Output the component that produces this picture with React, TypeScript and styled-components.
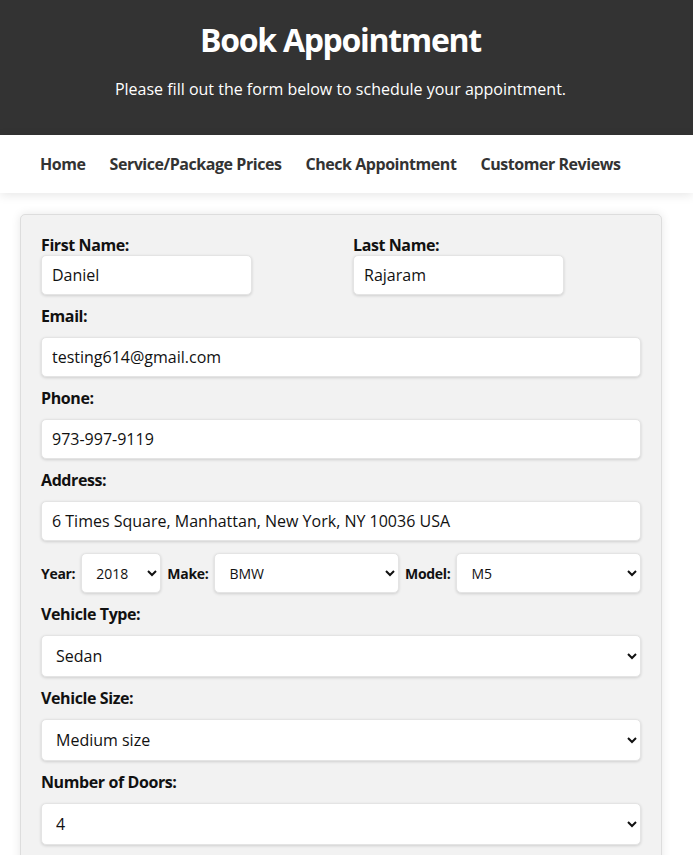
import React from "react";
import styled, { createGlobalStyle } from "styled-components";

const Global = createGlobalStyle`
  html, body { margin: 0; padding: 0; background: #fff; }
  body { font-family: "Open Sans", "Noto Sans", sans-serif; color: #111; }
  * { box-sizing: border-box; }
`;

const Header = styled.header`
  background: #333;
  color: #fff;
  text-align: center;
  padding: 20px 12px 36px 0;
`;

const Title = styled.h1`
  margin: 0;
  font-size: 32px;
  line-height: 40px;
  font-weight: 700;
  letter-spacing: -1.3px;
`;

const Subtitle = styled.p`
  margin: 19px 0 0;
  font-size: 16px;
  line-height: 20px;
`;

const Nav = styled.nav`
  position: relative;
  z-index: 1;
  background: #fff;
  height: 58px;
  display: flex;
  align-items: center;
  gap: 24px;
  padding-left: 40px;
  box-shadow: 0 2px 10px rgba(0, 0, 0, 0.1);
`;

const NavLink = styled.a`
  color: #333;
  font-weight: 700;
  font-size: 16px;
  letter-spacing: -0.45px;
  text-decoration: none;
`;

const Card = styled.form`
  width: 642px;
  margin: 21px 0 0 20px;
  padding: 20px;
  background: #f2f2f2;
  border: 1px solid #ddd;
  border-radius: 5px;
  box-shadow: 0 0 10px rgba(0, 0, 0, 0.1);
`;

const NameRow = styled.div`
  display: grid;
  grid-template-columns: 312px 1fr;
`;

const NameLabel = styled.label`
  display: block;
  font-size: 16px;
  font-weight: 700;
  line-height: 20px;
  letter-spacing: -0.4px;
`;

const Label = styled.label`
  display: block;
  font-size: 16px;
  font-weight: 700;
  line-height: 22px;
  letter-spacing: -0.4px;
  margin: 10px 0;
`;

const fieldBase = `
  display: block;
  border: 1px solid #e4e4e4;
  border-radius: 5px;
  background: #fff;
  box-shadow: 0 1px 3px rgba(0, 0, 0, 0.15);
  font-family: "Open Sans", "Noto Sans", sans-serif;
  color: #111;
  outline: none;
`;

const Input = styled.input<{ $w?: number }>`
  ${fieldBase}
  width: ${(p) => (p.$w ? `${p.$w}px` : "100%")};
  height: 40px;
  padding: 0 10px;
  font-size: 16px;
`;

const Select = styled.select`
  ${fieldBase}
  width: 100%;
  height: 42px;
  padding: 0 10px;
  font-size: 16px;
`;

const VehicleRow = styled.div`
  display: flex;
  align-items: center;
  gap: 6px;
  margin-top: 12px;
`;

const InlineLabel = styled.label`
  font-size: 14px;
  font-weight: 700;
  letter-spacing: -0.3px;
`;

const SmallSelect = styled.select<{ $w?: number }>`
  ${fieldBase}
  height: 40px;
  padding: 0 10px;
  font-size: 14px;
  ${(p) => (p.$w ? `width: ${p.$w}px; flex: none;` : "flex: 1; min-width: 0;")}
`;

export default function App() {
  return (
    <>
      <Global />
      <Header>
        <Title>Book Appointment</Title>
        <Subtitle>Please fill out the form below to schedule your appointment.</Subtitle>
      </Header>
      <Nav>
        <NavLink href="#">Home</NavLink>
        <NavLink href="#">Service/Package Prices</NavLink>
        <NavLink href="#">Check Appointment</NavLink>
        <NavLink href="#">Customer Reviews</NavLink>
      </Nav>
      <Card onSubmit={(e) => e.preventDefault()}>
        <NameRow>
          <div>
            <NameLabel htmlFor="first">First Name:</NameLabel>
            <Input id="first" $w={211} defaultValue="Daniel" />
          </div>
          <div>
            <NameLabel htmlFor="last">Last Name:</NameLabel>
            <Input id="last" $w={211} defaultValue="Rajaram" />
          </div>
        </NameRow>
        <Label htmlFor="email">Email:</Label>
        <Input id="email" defaultValue="testing614@gmail.com" />
        <Label htmlFor="phone">Phone:</Label>
        <Input id="phone" defaultValue="973-997-9119" />
        <Label htmlFor="address">Address:</Label>
        <Input id="address" defaultValue="6 Times Square, Manhattan, New York, NY 10036 USA" />
        <VehicleRow>
          <InlineLabel htmlFor="year">Year:</InlineLabel>
          <SmallSelect id="year" $w={80} defaultValue="2018">
            <option>2018</option>
          </SmallSelect>
          <InlineLabel htmlFor="make">Make:</InlineLabel>
          <SmallSelect id="make" defaultValue="BMW">
            <option>BMW</option>
          </SmallSelect>
          <InlineLabel htmlFor="model">Model:</InlineLabel>
          <SmallSelect id="model" defaultValue="M5">
            <option>M5</option>
          </SmallSelect>
        </VehicleRow>
        <Label htmlFor="vtype">Vehicle Type:</Label>
        <Select id="vtype" defaultValue="Sedan">
          <option>Sedan</option>
        </Select>
        <Label htmlFor="vsize">Vehicle Size:</Label>
        <Select id="vsize" defaultValue="Medium size">
          <option>Medium size</option>
        </Select>
        <Label htmlFor="doors">Number of Doors:</Label>
        <Select id="doors" defaultValue="4">
          <option>4</option>
        </Select>
      </Card>
    </>
  );
}
